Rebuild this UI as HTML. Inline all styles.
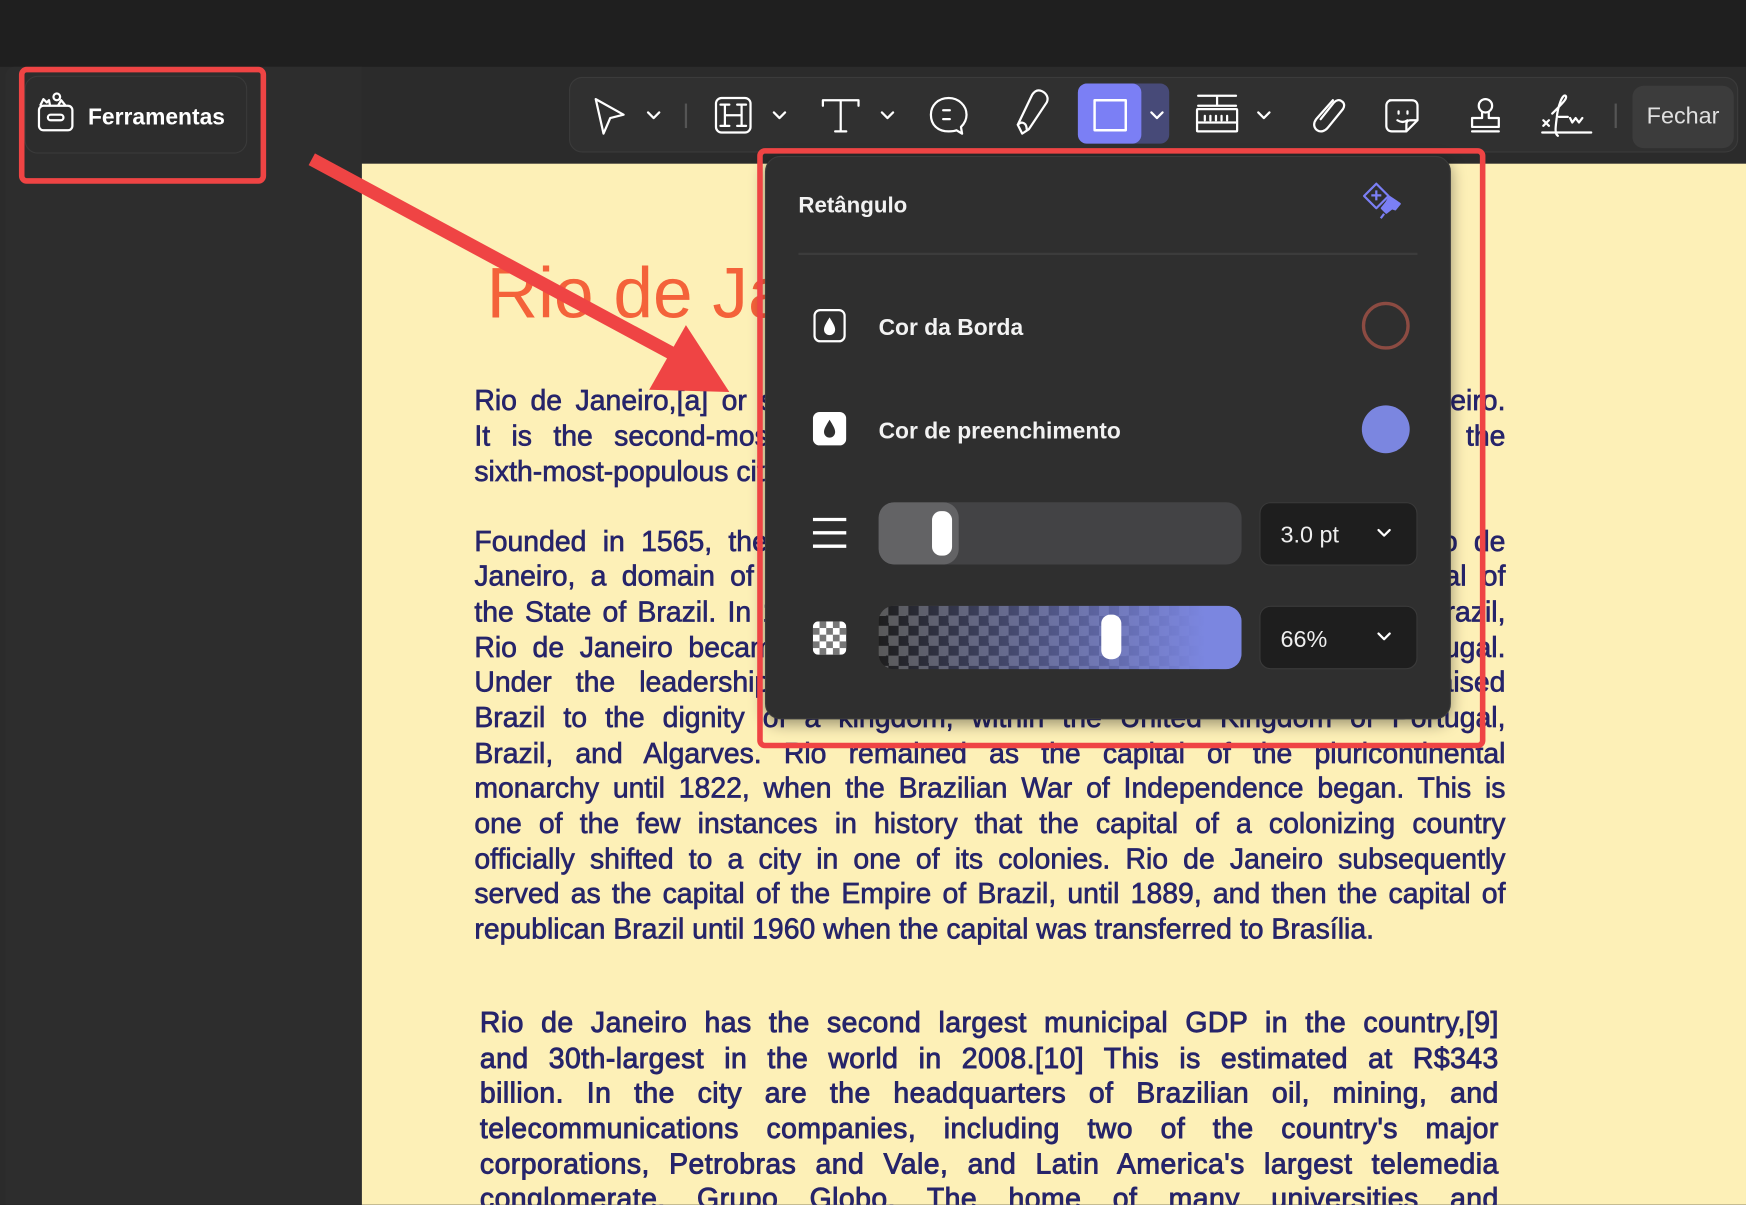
<!DOCTYPE html>
<html><head><meta charset="utf-8"><style>
html,body{margin:0;padding:0;background:#1f1f1f;overflow:hidden;width:1746px;height:1204px}
#s{position:absolute;left:0;top:0;width:1568px;height:1082px;transform:scale(1.11352);transform-origin:0 0;font-family:"Liberation Sans",sans-serif;background:#1f1f1f;overflow:hidden}
.a{position:absolute}
.ln{position:absolute;left:426px;width:926px;font-size:25.5px;line-height:31.7px;color:#26246a;text-align:justify;text-align-last:justify;white-space:nowrap;-webkit-text-stroke:0.6px #26246a}
.ln.l{text-align-last:left}
.p3{left:431px;width:915px;letter-spacing:0.4px;-webkit-text-stroke:0.8px #26246a}
.dd{position:absolute;background:#1e1e1e;border:1.5px solid #3a3a3a;border-radius:10px;color:#eee;font-size:21px;box-sizing:border-box}
.lab{position:absolute;color:#f2f2f2;font-size:20.5px;font-weight:bold}
</style></head><body><div id="s">
<div class="a" style="left:0;top:60px;width:1568px;height:1022px;background:#2b2b2b"></div>
<div class="a" style="left:5px;top:60px;width:320px;height:1022px;background:#2d2d2d;border-radius:8px 0 0 0"></div>
<div class="a" style="left:325px;top:147px;width:1243px;height:935px;background:#fdf0b7"></div>
<div class="a" style="left:437px;top:226px;font-size:64px;color:#f4623a;white-space:nowrap">Rio de Janeiro</div>
<div class="ln" style="top:345px">Rio de Janeiro,[a] or simply Rio, is the capital of the state of Rio de Janeiro.</div>
<div class="ln" style="top:377px">It is the second-most populous city in Brazil (after São Paulo) and the</div>
<div class="ln l" style="top:409px">sixth-most-populous city in the Americas.</div>
<div class="ln" style="top:472px">Founded in 1565, the city was initially the seat of the Captaincy of Rio de</div>
<div class="ln" style="top:503px">Janeiro, a domain of the Portuguese Empire. Later, it became the capital of</div>
<div class="ln" style="top:535px">the State of Brazil. In 1808, when the Portuguese Royal Court moved to Brazil,</div>
<div class="ln" style="top:567px">Rio de Janeiro became the seat of the court of Queen Maria I of Portugal.</div>
<div class="ln" style="top:598px">Under the leadership of her son, Prince Regent John, Portugal raised</div>
<div class="ln" style="top:630px">Brazil to the dignity of a kingdom, within the United Kingdom of Portugal,</div>
<div class="ln" style="top:662px">Brazil, and Algarves. Rio remained as the capital of the pluricontinental</div>
<div class="ln" style="top:693px">monarchy until 1822, when the Brazilian War of Independence began. This is</div>
<div class="ln" style="top:725px">one of the few instances in history that the capital of a colonizing country</div>
<div class="ln" style="top:757px">officially shifted to a city in one of its colonies. Rio de Janeiro subsequently</div>
<div class="ln" style="top:788px">served as the capital of the Empire of Brazil, until 1889, and then the capital of</div>
<div class="ln l" style="top:820px">republican Brazil until 1960 when the capital was transferred to Brasília.</div>
<div class="ln p3" style="top:904px">Rio de Janeiro has the second largest municipal GDP in the country,[9]</div>
<div class="ln p3" style="top:936px">and 30th-largest in the world in 2008.[10] This is estimated at R$343</div>
<div class="ln p3" style="top:967px">billion. In the city are the headquarters of Brazilian oil, mining, and</div>
<div class="ln p3" style="top:999px">telecommunications companies, including two of the country's major</div>
<div class="ln p3" style="top:1031px">corporations, Petrobras and Vale, and Latin America's largest telemedia</div>
<div class="ln p3" style="top:1062px">conglomerate, Grupo Globo. The home of many universities and</div>

<div class="a" style="left:511px;top:69px;width:1050px;height:68px;background:#303030;border:1.5px solid #3b3b3b;border-radius:12px;box-sizing:border-box"></div>
<div class="a" style="left:968px;top:75px;width:82px;height:54px;background:#474a78;border-radius:8px"></div>
<div class="a" style="left:968px;top:75px;width:57px;height:54px;background:#7b7ff5;border-radius:8px"></div>
<div class="a" style="left:615px;top:93px;width:1.5px;height:22px;background:#555"></div>
<div class="a" style="left:1450px;top:93px;width:1.5px;height:22px;background:#555"></div>
<div class="a" style="left:1466px;top:77px;width:91px;height:56px;background:#3c3c3c;border-radius:10px;color:#e0e0e0;font-size:21px;line-height:56px;text-align:center">Fechar</div>
<svg class="a" style="left:0;top:0" width="1568" height="140" fill="none" stroke="#fff" stroke-width="2" stroke-linejoin="round" stroke-linecap="round">
<path d="M535 89 L560 103 L548 106 L542 120 Z"/>
<path d="M582 101 l5 5 l5-5 M695 101 l5 5 l5-5 M792 101 l5 5 l5-5 M1034 101 l5 5 l5-5 M1130 101 l5 5 l5-5"/>
<rect x="643" y="88" width="31" height="31" rx="5"/>
<path d="M651 94 v19 M666 94 v19 M651 103.5 h15 M647 94 h8 M662 94 h8 M647 113 h8 M662 113 h8"/>
<path d="M739 90 h32 M739 90 v5 M771 90 v5 M755 90 v28 M750 118 h10"/>
<path d="M852 88 c-10 0 -16 7 -16 15 c0 9 6 15 16 15 c3 0 5 0 7 -1 l5 3 l-1-6 c3-3 5-7 5-11 c0-8-7-15-16-15 Z M847 99 h6 M847 107 h6"/>
<path d="M914 112 l4 8 l6-4 l16-24 c2-4 0-8-4-10 c-4-2-7 0-9 3 Z M914 112 c4-4 8-1 8 4"/>
<rect x="983" y="90" width="28" height="27" stroke-width="2.2"/>
<path d="M1076 86 h34 M1093 86 v9 M1076 95 h34 M1076 98 h34 c1 0 1 0 1 1 v18 c0 1 0 1-1 1 h-34 c-1 0-1 0-1-1 v-18 c0-1 0-1 1-1 Z M1082 104 v4 M1087 104 v4 M1092 104 v4 M1097 104 v4 M1102 104 v4 M1076 110 h34"/>
<path d="M1197 90 l-15 17 c-3 4-2 8 1 10 c3 2 7 1 10-3 l13-16 c2-3 1-6-1-7 c-2-2-5-1-7 1 l-12 15"/>
<path d="M1248 90 h20 c3 0 5 2 5 5 v13 l-10 10 h-13 c-3 0-5-2-5-5 v-18 c0-3 2-5 5-5 Z M1273 108 h-6 c-3 0-4 1-4 4 v6 M1256 100 v2 M1264 100 v2 M1255 108 c3 2 6 2 9 0"/>
<circle cx="1334" cy="95" r="6"/><path d="M1331 101 v5 h-9 v8 h24 v-8 h-9 v-5 M1322 118 h24"/>
<path d="M1386 108 l5 5 M1391 108 l-5 5 M1385 119 h44 M1394 102 c10-10 14-14 12-16 c-3-2-7 10-8 20 c-1 8-2 14 1 16 M1400 105 h8 M1410 106 l2 4 l3-4 l3 4 l3-4"/>
</svg>

<div class="a" style="left:22px;top:68px;width:200px;height:70px;border:1.5px solid #3a3a3a;border-radius:12px;box-sizing:border-box"></div>
<svg class="a" style="left:30px;top:82px" width="40" height="40" fill="none" stroke="#fff" stroke-width="2" stroke-linejoin="round">
<rect x="5" y="13" width="30" height="22" rx="4"/><rect x="13" y="21" width="14" height="5" rx="2.5"/>
<path d="M6 13 l3-6 l3 3 l2-2 l1 5 M22 13 l3-5 l4 5"/><circle cx="21" cy="5" r="3"/></svg>
<div class="a" style="left:79px;top:94px;color:#fff;font-size:20.5px;font-weight:bold">Ferramentas</div>
<div class="a" style="left:17px;top:60px;width:222px;height:105px;border:5px solid #ef4444;border-radius:7px;box-sizing:border-box"></div>

<svg class="a" style="left:0;top:0" width="800" height="420">
<path d="M280 143 L612 322" stroke="#ef4444" stroke-width="12"/>
<path d="M655 352 L583 350 L616 292 Z" fill="#ef4444"/>
</svg>

<div class="a" style="left:687px;top:140px;width:616px;height:506px;background:#2f2f2f;border:1.5px solid #3c3c3c;border-radius:14px;box-sizing:border-box;box-shadow:0 4px 14px rgba(0,0,0,.4)"></div>
<div class="lab" style="left:717px;top:174px;font-size:20px">Retângulo</div>
<svg class="a" style="left:1222px;top:162px" width="44" height="38" fill="none" stroke="#7b7ff5" stroke-width="2" stroke-linejoin="round">
<path d="M14 3 L25 14 L14 25 L3 14 Z M14 9 v9 M9.5 13.5 h9"/><path d="M26 15 l9 6 l-4 5 l-3 -1 l-5 4 l-4 -4 l4-5 Z M21 30 l-3 4" fill="#7b7ff5"/></svg>
<div class="a" style="left:717px;top:227px;width:556px;height:1.5px;background:#3c3c3c"></div>
<svg class="a" style="left:730px;top:277px" width="30" height="32"><rect x="1.5" y="1.5" width="27" height="28" rx="5" fill="none" stroke="#fff" stroke-width="2"/><path d="M15 8 c-3 5-5 8-5 11 a5 5 0 0 0 10 0 c0-3-2-6-5-11 Z" fill="#fff"/></svg>
<div class="lab" style="left:789px;top:283px">Cor da Borda</div>
<div class="a" style="left:1223px;top:271px;width:43px;height:43px;border:3.5px solid #8c4b42;border-radius:50%;box-sizing:border-box"></div>
<svg class="a" style="left:730px;top:370px" width="30" height="32"><rect x="0" y="0" width="30" height="30" rx="6" fill="#fff"/><path d="M15 7 c-3 5-5 8-5 11 a5 5 0 0 0 10 0 c0-3-2-6-5-11 Z" fill="#2f2f2f"/></svg>
<div class="lab" style="left:789px;top:376px">Cor de preenchimento</div>
<div class="a" style="left:1223px;top:364px;width:43px;height:43px;background:#7b86e0;border-radius:50%"></div>
<svg class="a" style="left:730px;top:465px" width="31" height="28"><path d="M0 1.5 h30 M0 13.5 h30 M0 25.5 h30" stroke="#fff" stroke-width="3"/></svg>
<div class="a" style="left:789px;top:451px;width:326px;height:56px;background:#434345;border-radius:14px;overflow:hidden"><div style="width:72px;height:56px;background:#636365;border-radius:14px"></div></div>
<div class="a" style="left:837px;top:459px;width:18px;height:40px;background:#fff;border-radius:8px"></div>
<div class="dd" style="left:1131px;top:451px;width:142px;height:57px"><span style="position:absolute;left:18px;top:17px">3.0 pt</span></div>
<svg class="a" style="left:730px;top:558px" width="30" height="30"><rect width="30" height="30" rx="5" fill="#fff"/><g fill="#777"><rect x="6" y="0" width="6" height="6"/><rect x="18" y="0" width="6" height="6"/><rect x="0" y="6" width="6" height="6"/><rect x="12" y="6" width="6" height="6"/><rect x="24" y="6" width="6" height="6"/><rect x="6" y="12" width="6" height="6"/><rect x="18" y="12" width="6" height="6"/><rect x="0" y="18" width="6" height="6"/><rect x="12" y="18" width="6" height="6"/><rect x="24" y="18" width="6" height="6"/><rect x="6" y="24" width="6" height="6"/><rect x="18" y="24" width="6" height="6"/></g></svg>
<div class="a" style="left:789px;top:544px;width:326px;height:57px;border-radius:14px;overflow:hidden;background:repeating-conic-gradient(#1e1e1e 0 25%,#5a5a5a 0 50%) 0 0/18px 18px">
<div style="position:absolute;inset:0;background:linear-gradient(90deg,rgba(123,134,224,0) 0%,rgba(123,134,224,.5) 45%,#7b86e0 90%)"></div></div>
<div class="a" style="left:989px;top:552px;width:18px;height:40px;background:#fff;border-radius:8px"></div>
<div class="dd" style="left:1131px;top:544px;width:142px;height:57px"><span style="position:absolute;left:18px;top:18px">66%</span></div>
<svg class="a" style="left:0;top:0;pointer-events:none" width="1568" height="620" fill="none" stroke="#fff" stroke-width="2" stroke-linecap="round" stroke-linejoin="round"><path d="M1238 476 l5 5 l5-5 M1238 569 l5 5 l5-5"/></svg>
<div class="a" style="left:680px;top:133px;width:654px;height:539px;border:5px solid #ef4444;border-radius:7px;box-sizing:border-box"></div>
</div></body></html>
